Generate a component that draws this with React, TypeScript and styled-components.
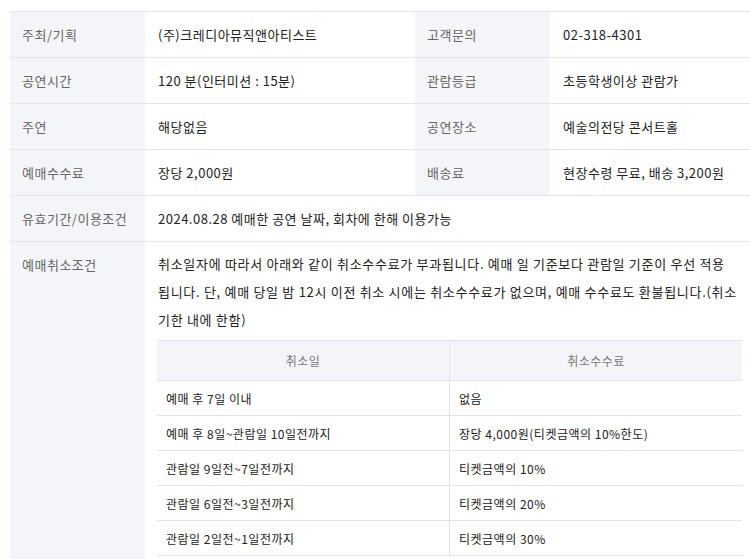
import React from "react";
import styled, { createGlobalStyle } from "styled-components";

const Global = createGlobalStyle`
  html, body { margin: 0; padding: 0; background: #fff; overflow: hidden; }
  body { font-family: "Noto Sans CJK KR", "Noto Sans", sans-serif; letter-spacing: 0.5px; }
`;

const Page = styled.div`
  padding: 11px 0 0 10px;
  width: 745px;
`;

const InfoTable = styled.table`
  width: 745px;
  border-collapse: collapse;
  table-layout: fixed;
  border-top: 1px solid #e1e4ea;
  font-size: 13px;
`;

const Row = styled.tr`
  border-bottom: 1px solid #e1e4ea;
`;

const Label = styled.th`
  box-sizing: border-box;
  background: #f4f5f9;
  color: #666;
  font-weight: 400;
  text-align: left;
  vertical-align: top;
  padding: 12px;
  height: 45px;
  line-height: 21px;
`;

const Value = styled.td`
  box-sizing: border-box;
  color: #222;
  vertical-align: top;
  padding: 12px 12px 12px 13px;
  height: 45px;
  line-height: 21px;
`;

const Paragraph = styled.p`
  margin: -4px 0 0;
  line-height: 28px;
  letter-spacing: 0.7px;
  white-space: nowrap;
`;

const FeeTable = styled.table`
  width: 585px;
  border-collapse: collapse;
  table-layout: fixed;
  margin-top: 6px;
  margin-left: -1px;
  border-top: 1px solid #e1e4ea;
  font-size: 12px;
`;

const FeeHead = styled.th`
  background: #f4f5f9;
  color: #777;
  font-weight: 400;
  height: 39px;
  padding: 0;
  text-align: center;
  border-bottom: 1px solid #e1e4ea;
  & + & { border-left: 1px solid #e1e4ea; }
`;

const FeeCell = styled.td`
  color: #222;
  height: 34px;
  padding: 0 9px;
  border-bottom: 1px solid #e1e4ea;
  & + & { border-left: 1px solid #e1e4ea; }
`;

const rows: [string, string, string, string][] = [
  ["주최/기획", "(주)크레디아뮤직앤아티스트", "고객문의", "02-318-4301"],
  ["공연시간", "120 분(인터미션 : 15분)", "관람등급", "초등학생이상 관람가"],
  ["주연", "해당없음", "공연장소", "예술의전당 콘서트홀"],
  ["예매수수료", "장당 2,000원", "배송료", "현장수령 무료, 배송 3,200원"],
];

const fees: [string, string][] = [
  ["예매 후 7일 이내", "없음"],
  ["예매 후 8일~관람일 10일전까지", "장당 4,000원(티켓금액의 10%한도)"],
  ["관람일 9일전~7일전까지", "티켓금액의 10%"],
  ["관람일 6일전~3일전까지", "티켓금액의 20%"],
  ["관람일 2일전~1일전까지", "티켓금액의 30%"],
];

export default function App() {
  return (
    <>
      <Global />
      <Page>
        <InfoTable>
          <colgroup>
            <col style={{ width: 135 }} />
            <col style={{ width: 270 }} />
            <col style={{ width: 135 }} />
            <col />
          </colgroup>
          <tbody>
            {rows.map((r) => (
              <Row key={r[0]}>
                <Label>{r[0]}</Label>
                <Value>{r[1]}</Value>
                <Label>{r[2]}</Label>
                <Value>{r[3]}</Value>
              </Row>
            ))}
            <Row>
              <Label>유효기간/이용조건</Label>
              <Value colSpan={3}>2024.08.28 예매한 공연 날짜, 회차에 한해 이용가능</Value>
            </Row>
            <Row>
              <Label>예매취소조건</Label>
              <Value colSpan={3}>
                <Paragraph>
                  취소일자에 따라서 아래와 같이 취소수수료가 부과됩니다. 예매 일 기준보다 관람일 기준이 우선 적용
                  <br />
                  됩니다. 단, 예매 당일 밤 12시 이전 취소 시에는 취소수수료가 없으며, 예매 수수료도 환불됩니다.(취소
                  <br />
                  기한 내에 한함)
                </Paragraph>
                <FeeTable>
                  <thead>
                    <tr>
                      <FeeHead>취소일</FeeHead>
                      <FeeHead>취소수수료</FeeHead>
                    </tr>
                  </thead>
                  <tbody>
                    {fees.map((f) => (
                      <tr key={f[0]}>
                        <FeeCell>{f[0]}</FeeCell>
                        <FeeCell>{f[1]}</FeeCell>
                      </tr>
                    ))}
                  </tbody>
                </FeeTable>
              </Value>
            </Row>
          </tbody>
        </InfoTable>
      </Page>
    </>
  );
}
